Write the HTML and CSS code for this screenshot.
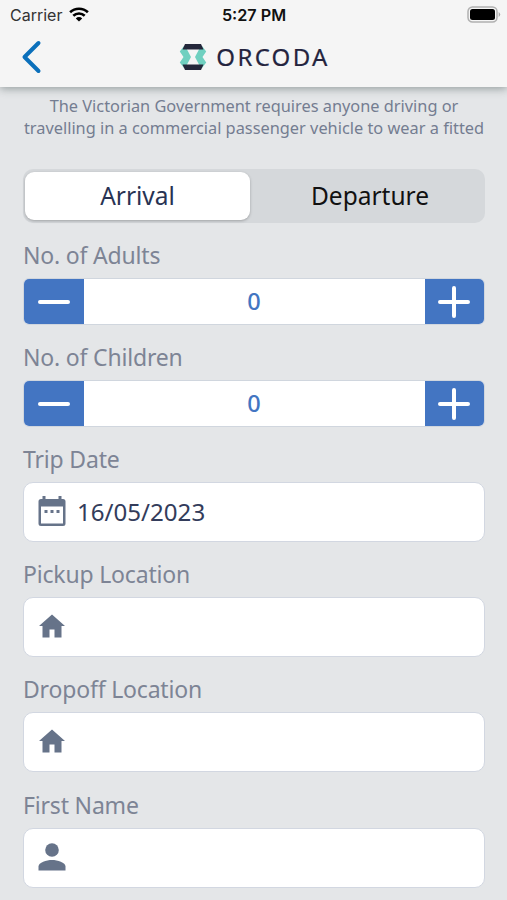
FILE: index.html
```html
<!DOCTYPE html>
<html lang="en">
<head>
<meta charset="utf-8">
<title>Orcoda booking</title>
<link rel="stylesheet" href="styles.css">
</head>
<body>
<header class="header">
  <div class="status">
    <div class="carrier"><span class="carrier-name">Carrier</span>
      <svg class="wifi" width="20" height="15" viewBox="0 0 20 15" fill="none" stroke="#000" stroke-width="2.6"><path d="M1.1 5.3a12.8 12.8 0 0 1 17.8 0M4.3 8.8a8.2 8.2 0 0 1 11.4 0"/><path d="M10 14.6 6.8 11.4a4.6 4.6 0 0 1 6.4 0z" fill="#000" stroke="none"/></svg>
    </div>
    <span class="time">5:27 PM</span>
    <svg class="battery" width="34" height="17" viewBox="0 0 34 17"><rect x="1" y="1" width="29" height="15" rx="4.5" fill="none" stroke="#b0b0b0" stroke-width="1.5"/><rect x="3" y="3" width="25" height="11" rx="2.5" fill="#000"/><path d="M31.7 6q3 2.5 0 5z" fill="#a8a8a8"/></svg>
  </div>
  <nav class="nav">
    <svg class="back" width="22" height="34" viewBox="0 0 22 34" fill="none" stroke="#0b70bb" stroke-width="4" stroke-linecap="round" stroke-linejoin="round"><path d="M17.5 3 3.500 17 17.500 31"/></svg>
    <div class="brand">
      <svg width="28" height="28" viewBox="0 0 28 28"><path d="M5 3 .800 8.500l3.700 5.500-3.700 5.500L5 25l2.500-2.500L12 14 7.500 5.500zM23 3l4.200 5.500-3.700 5.500 3.700 5.500L23 25l-2.500-2.500L16 14l4.500-8.500z" fill="#70d0c0"/><path d="M6 1h16l2.500 5.500h-21zM3.500 21.500h21L22 27H6z" fill="#24273a"/></svg>
      <span class="brand-name">ORCODA</span>
    </div>
  </nav>
</header>
<main class="content">
  <p class="notice">The Victorian Government requires anyone driving or<br>travelling in a commercial passenger vehicle to wear a fitted</p>
  <div class="segment"><button class="tab active">Arrival</button><button class="tab">Departure</button></div>

  <section class="field count"><label class="label">No. of Adults</label>
    <div class="stepper"><button class="step"><svg width="34" height="34" viewBox="0 0 34 34"><path d="M3 17h28"/></svg></button><span class="value">0</span><button class="step"><svg width="34" height="34" viewBox="0 0 34 34"><path d="M3 17h28M17 3v28"/></svg></button></div></section>
  <section class="field count"><label class="label">No. of Children</label>
    <div class="stepper"><button class="step"><svg width="34" height="34" viewBox="0 0 34 34"><path d="M3 17h28"/></svg></button><span class="value">0</span><button class="step"><svg width="34" height="34" viewBox="0 0 34 34"><path d="M3 17h28M17 3v28"/></svg></button></div></section>
  <section class="field"><label class="label">Trip Date</label>
    <div class="input"><svg class="icon" width="30" height="32" viewBox="0 0 30 32"><path fill-rule="evenodd" d="M5.500 0h3v3h13V0h3v3H26q2.500 0 2.500 2.500v22q0 2.500-2.500 2.500H4q-2.500 0-2.500-2.500v-22Q1.500 3 4 3h1.500zM4 10.500V27.500h22v-17z"/><path d="M7.500 14h3v3h-3zM13.500 14h3v3h-3zM19.500 14h3v3h-3z"/></svg><span class="date">16/05/2023</span></div></section>
  <section class="field"><label class="label">Pickup Location</label>
    <div class="input"><svg class="icon" width="30" height="32" viewBox="0 0 30 32"><path d="M15 3.500 28 15h-3.500v11.500h-7v-8h-5v8h-7V15H2z"/></svg></div></section>
  <section class="field"><label class="label">Dropoff Location</label>
    <div class="input"><svg class="icon" width="30" height="32" viewBox="0 0 30 32"><path d="M15 3.500 28 15h-3.500v11.500h-7v-8h-5v8h-7V15H2z"/></svg></div></section>
  <section class="field"><label class="label">First Name</label>
    <div class="input"><svg class="icon" width="30" height="32" viewBox="0 0 30 32"><circle cx="15" cy="8" r="6.800"/><path d="M1.500 28.500v-4c0-4 8-6.500 13.500-6.500s13.500 2.500 13.500 6.500v4z"/></svg></div></section>
</main>
</body>
</html>
```
FILE: styles.css
```css
* { box-sizing: border-box; }
body { margin: 0; height: 900px; overflow: hidden; background: #e4e6e8; font-family: "Noto Sans", "Open Sans", sans-serif; }
button { border: 0; padding: 0; margin: 0; font: inherit; }
.header { position: relative; height: 87px; background: #f5f5f5; box-shadow: 0 2px 8px rgba(60, 75, 75, .45); }
.status { display: grid; grid-template-columns: 1fr auto 1fr; align-items: center; height: 29px; padding: 0 6px 0 10px; font-family: Inter, sans-serif; }
.carrier { display: flex; align-items: center; gap: 7px; }
.carrier-name { font-size: 16px; color: #333; }
.time { margin-right: 3px; font-size: 16.2px; font-weight: 600; color: #111; }
.battery { justify-self: end; }
.nav { display: grid; grid-template-columns: 1fr auto 1fr; align-items: center; height: 56px; padding: 0 21px; }
.brand { display: flex; align-items: center; gap: 9px; }
.brand-name { font-size: 24px; line-height: 30px; letter-spacing: 2.3px; margin-right: -2px; color: #24243e; -webkit-text-stroke: .2px #24243e; }
.content { padding: 8px 22px 0 23px; }
.notice { margin: 0 -4px; height: 44px; font-size: 16.35px; line-height: 22px; text-align: center; white-space: nowrap; color: #747d91; }
.segment { display: grid; grid-template-columns: 1fr 1fr; height: 54px; margin: 30px 0 17px; padding: 3px 2px; border-radius: 10px; background: #d5d8db; }
.tab { font-size: 24.5px; line-height: 48px; border-radius: 9px; background: transparent; color: #111; }
.tab:last-child { padding-left: 3px; }
.active { width: 225px; background: #fff; color: #283353; box-shadow: 0 1px 3px rgba(0, 0, 0, .25); }
.field { height: 115.2px; }
.count { height: 102px; }
.label { display: block; height: 38px; font-size: 23px; line-height: 30px; letter-spacing: -.18px; color: #7d8495; white-space: nowrap; }
.stepper { display: flex; height: 47px; border: 1px solid #d0d6de; border-radius: 6px; background: #fff; overflow: hidden; }
.step { display: grid; place-items: center; width: 59.5px; background: #4375c2; }
.step svg { fill: none; stroke: #fff; stroke-width: 4; stroke-linecap: round; }
.value { flex: 1; text-align: center; font-size: 23.5px; font-weight: 500; line-height: 44px; color: #4375c2; }
.input { display: flex; align-items: center; gap: 10px; height: 60px; padding: 0 13px; border: 1px solid #d2d7e1; border-radius: 10px; background: #fff; }
.icon { fill: #667389; }
.date { font-size: 24.1px; line-height: 30px; color: #333c5b; }
```
